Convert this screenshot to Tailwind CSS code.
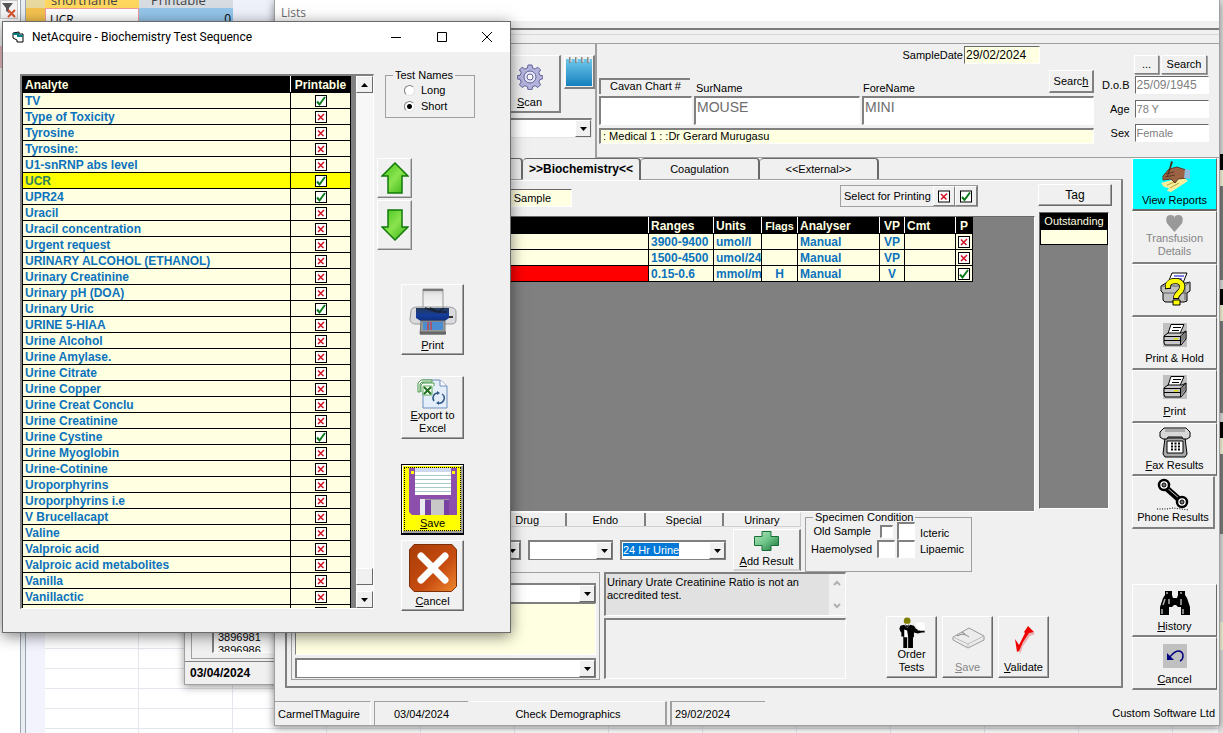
<!DOCTYPE html>
<html lang="en">
<head>
<meta charset="utf-8">
<title>NetAcquire</title>
<script src="https://cdn.jsdelivr.net/npm/@tailwindcss/browser@4"></script>
</head>
<body class="relative h-screen overflow-hidden bg-white font-['Liberation_Sans',Arial,sans-serif] text-[11px] leading-[13px] text-black">

<svg class="hidden" aria-hidden="true">
  <symbol id="tick" viewBox="0 0 12 12"><rect x=".5" y=".5" width="11" height="11" fill="#fff" stroke="#000"/><path d="M2 6.500L4.500 9.500 10 2" fill="none" stroke="#087a18" stroke-width="2"/></symbol>
  <symbol id="cross" viewBox="0 0 12 12"><rect x=".5" y=".5" width="11" height="11" fill="#fff" stroke="#000"/><path d="M3 3.5l5.500 5.500M9 3L3 9" stroke="#d01020" stroke-width="1.500"/></symbol>
  <symbol id="down" viewBox="0 0 7 4"><path d="M0 0h7L3.500 4z"/></symbol>
  <symbol id="printer" viewBox="0 0 24 24"><path fill="#c0c0c0" d="M0 0h24v24H0z"/><path d="M8 1.500h13l-4 9H5z" fill="#fff" stroke="#000"/><path d="M10 4.500h8M9 7.500h7" stroke="#000"/><path d="M1 13l4-3h14l4-2v8l-5 6H2l-1-2z" fill="#c8c8c8" stroke="#000"/><path d="M1 13.500h16l6-5M17.500 13v9M1 17.500h16" stroke="#000" fill="none"/><path d="M18 13l4-3v6l-4 4z" fill="#808080"/><path d="M11 15h4v1.500h-4z" fill="#dd0"/></symbol>
</svg>

<!-- datasheet behind the windows -->
<div class="absolute inset-0 flex" aria-hidden="true">
  <div class="w-5 shrink-0 bg-white">
    <div class="flex h-[19px] w-[18px] items-center justify-center border border-[#c8c8c8] bg-[#f4f4f4]">
      <svg class="h-4 w-4" viewBox="0 0 16 16"><path d="M1 1h11L8 6v5L5 9V6z" fill="#555"/><path d="M7 8l7 7M14 8l-7 7" stroke="#d9532c" stroke-width="2"/></svg>
    </div>
    <div class="mt-[27px] h-[22px] bg-[#f6c5cb]"></div>
  </div>
  <div class="w-[6px] shrink-0 border-x border-[#9aa5b5] bg-[#e9edf2]"></div>
  <div class="w-[19px] shrink-0 bg-[#f3f3fd]"><div class="h-2 bg-[#e8d9a0]"></div><div class="h-5 bg-[#f4c24e]"></div></div>
  <div class="min-w-0 flex-1 bg-[repeating-linear-gradient(to_bottom,transparent_0_8px,#e4e7ee_8px_9px,transparent_9px_20px),repeating-linear-gradient(to_right,transparent_0_93px,#e4e7ee_93px_94px)]">
    <div class="flex h-2 overflow-hidden font-['Open_Sans'] text-[13px] leading-[10px] text-[#444]">
      <div class="flex w-[94px] items-end bg-[#ffd75e] pl-[6px]"><span class="-translate-y-[3px]">shortname</span></div>
      <div class="flex w-[94px] items-end bg-[#d7dbe2] pl-3"><span class="-translate-y-[3px]">Printable</span></div>
      <div class="flex-1 bg-[#eef1fa]"></div>
    </div>
    <div class="flex h-5 font-['Open_Sans'] text-[12px] leading-[22px]">
      <div class="w-[94px] border border-[#f09a9a] bg-white pl-1">UCR</div>
      <div class="w-[94px] bg-[#94c6ea] pr-[2px] text-right">0</div>
      <div class="flex-1 bg-[#eef1fa]"></div>
    </div>
  </div>
</div>

<!-- strip of the window on the far right -->
<div class="absolute inset-y-0 right-0 w-[5px] bg-[#e4e4e4]" aria-hidden="true">
  <div class="mt-[154px] h-4 bg-black"></div><div class="h-4 bg-[#ffffe1]"></div><div class="h-[94px] bg-[#808080]"></div>
  <div class="mt-[9px] h-4 bg-black"></div><div class="h-4 bg-[#ffffe1]"></div><div class="h-[92px] bg-[#808080]"></div>
  <div class="mt-[9px] h-4 bg-black"></div><div class="h-4 bg-[#ffffe1]"></div><div class="h-[80px] bg-[#808080]"></div>
  <div class="mt-[88px] h-7 bg-[#ffffe1]"></div>
</div>

<!-- window with the sample list -->
<div class="absolute top-[600px] left-[184px] w-[200px] border border-[#a0a0a0] bg-[#f0f0f0] shadow-[0_2px_8px_rgba(0,0,0,.4)]" aria-hidden="true">
  <div class="ml-[6px] h-[58px] border-b border-l border-[#a0a0a0] pl-5">
    <div class="h-[52px] overflow-hidden border-b border-l-2 border-[#808080] border-b-white bg-[#f8f8f8] pt-[30px] pl-1"><div>3896981</div><div>3896986</div></div>
  </div>
  <div class="mt-[2px] border-t border-[#808080] px-[5px] py-1 text-[12px] leading-[14px] font-bold">03/04/2024</div>
</div>

<!-- main window -->
<main class="absolute top-0 right-[3px] left-[274px] flex flex-col border border-t-0 border-[#a0a0a0] bg-[#f0f0f0] shadow-[0_2px_8px_rgba(0,0,0,.45)]">
  <header class="h-[21px] bg-white pt-[6px] pl-[6px] font-['Open_Sans'] text-[12px] text-[#6d6d6d]">Lists</header>
  <div class="mt-[7px] h-[7px] border-t-2 border-b border-t-[#7a7a7a] border-b-[#d8d8d8]"></div>

  <div class="mt-2 flex h-[115px]">
    <section class="flex w-[321px] shrink-0 flex-col items-end border-t border-r border-[#a0a0a0] pt-[11px]">
      <div class="flex items-start gap-[3px]">
        <button class="flex h-[58px] w-[62px] flex-col items-center justify-between border-2 border-t border-l border-white border-r-[#808080] border-b-[#808080] pt-2 pb-[2px]">
          <svg class="h-[26px] w-[26px]" viewBox="0 0 26 26"><g fill="#b3b3dc" stroke="#62629a"><path d="M11 1h4l.600 3 2.500 1 2.700-1.800 2.800 2.800-1.800 2.700 1 2.500 3 .600v3l-3 .700-1 2.500 1.800 2.700-2.800 2.800-2.700-1.800-2.500 1-.600 3h-4l-.600-3-2.500-1-2.700 1.800-2.800-2.800 1.800-2.700-1-2.500-3-.700v-3l3-.600 1-2.500L2.400 6l2.800-2.800L7.900 5l2.500-1z"/><circle cx="13" cy="13" r="6" fill="#e8e8f8"/><circle cx="13" cy="13" r="3" fill="#fff"/></g></svg>
          <span><u>S</u>can</span>
        </button>
        <button aria-label="Notes" class="h-[34px] w-[31px] border-2 border-t border-l border-white border-r-[#808080] border-b-[#808080]">
          <svg class="h-[31px] w-[28px]" viewBox="0 0 28 31"><defs><linearGradient id="nb" x2="0" y2="1"><stop stop-color="#6fc8ea"/><stop offset="1" stop-color="#1580bd"/></linearGradient></defs><path d="M1 3h26v27H1z" fill="url(#nb)"/><path d="M5 1v6M11 1v6M17 1v6M23 1v6" stroke="#888" stroke-width="2"/><path d="M6 1v5M12 1v5M18 1v5M24 1v5" stroke="#eee"/></svg>
        </button>
      </div>
      <div class="relative mt-[5px] mr-[3px]">
        <select aria-label="Source" class="block h-5 w-[200px] appearance-none border-2 border-r border-b border-[#808080] border-r-[#e3e3e3] border-b-[#e3e3e3] bg-white"><option></option></select>
        <span class="pointer-events-none absolute top-[2px] right-[1px] flex h-[17px] w-4 items-center justify-center border border-white border-r-[#696969] border-b-[#696969] bg-[#f0f0f0]"><svg class="h-1 w-[7px]"><use href="#down"/></svg></span>
      </div>
    </section>

    <section class="flex min-w-0 flex-1 gap-2 border-t border-b border-l border-[#a0a0a0] pr-3 pl-[2px]">
      <div class="min-w-0 flex-1">
        <div class="flex items-center justify-end gap-px pt-[2px] pr-[54px]">
          <label for="sd">SampleDate</label>
          <input id="sd" value="29/02/2024" class="h-[18px] w-[76px] border border-[#696969] border-r-white border-b-white bg-[#ffffe1] pl-px text-[12px] outline-none">
        </div>
        <div class="mt-[6px] flex h-[23px] items-start">
          <div class="mt-2 h-4 w-[91px] border-t-2 border-l-2 border-[#808080] border-b-white text-center">Cavan Chart #</div>
          <label for="sn" class="mt-3 ml-[6px] w-[167px]">SurName</label>
          <label for="fn" class="mt-3 flex-1">ForeName</label>
          <button class="h-[23px] w-[45px] border-2 border-t border-l border-white border-r-[#808080] border-b-[#808080]">Searc<u>h</u></button>
        </div>
        <div class="mt-[3px] flex gap-[2px]">
          <input aria-label="Cavan Chart #" class="h-[29px] w-[93px] border-2 border-r border-b border-[#808080] border-r-white border-b-white bg-white">
          <input id="sn" value="MOUSE" class="h-[29px] w-[166px] border-2 border-r border-b border-[#808080] border-r-white border-b-white bg-white pb-2 pl-px text-[14px] text-[#6d6d6d]">
          <input id="fn" value="MINI" class="h-[29px] min-w-0 flex-1 border-2 border-r border-b border-[#808080] border-r-white border-b-white bg-white pb-2 pl-px text-[14px] text-[#6d6d6d]">
        </div>
        <div class="mt-[3px] h-4 border-2 border-r border-b border-[#808080] border-r-white border-b-white bg-[#ffffe1] pl-[2px]">: Medical 1 : :Dr Gerard Murugasu</div>
      </div>
      <div class="w-[105px] pt-[11px]">
        <div class="flex justify-end gap-[2px]">
          <button class="h-[19px] w-[25px] border border-white border-r-[#808080] border-b-[#808080] shadow-[1px_1px_0_#a0a0a0]">...</button>
          <button class="h-[19px] w-[46px] border border-white border-r-[#808080] border-b-[#808080] shadow-[1px_1px_0_#a0a0a0]">Search</button>
        </div>
        <div class="mt-[2px] grid grid-cols-[1fr_74px] items-center gap-x-[5px] gap-y-[6px] text-right">
          <label for="dob">D.o.B</label><input id="dob" value="25/09/1945" class="h-[18px] w-full border border-[#696969] border-r-white border-b-white bg-white pl-px text-[12px] text-[#808080]">
          <label for="age">Age</label><input id="age" value="78 Y" class="h-[18px] w-full border border-[#696969] border-r-white border-b-white bg-white pl-px text-[#808080]">
          <label for="sex">Sex</label><input id="sex" value="Female" class="h-[18px] w-full border border-[#696969] border-r-white border-b-white bg-white pl-px text-[#808080]">
        </div>
      </div>
    </section>
  </div>

  <div class="flex justify-between">
    <div class="ml-[10px] w-[838px]">
      <nav class="flex h-[21px] pl-[118px]">
        <button class="w-[120px] rounded-t-sm border-t border-r-2 border-[#696969]"></button>
        <button class="-mb-px w-[118px] rounded-t-sm border-t border-r-2 border-[#696969] bg-[#f0f0f0] text-[12px] font-bold">&gt;&gt;Biochemistry&lt;&lt;</button>
        <button class="w-[119px] rounded-t-sm border-t border-r-2 border-[#696969]">Coagulation</button>
        <button class="w-[119px] rounded-t-sm border-t border-r-2 border-[#696969]">&lt;&lt;External&gt;&gt;</button>
      </nav>
      <section class="border-2 border-t border-[#808080] border-t-[#a0a0a0] pb-[6px] shadow-[inset_0_1px_0_#fff]">
        <div class="flex pr-[9px]">
          <div class="min-w-0 flex-1 pt-[5px] pr-[3px]">
            <div class="flex h-[31px] items-start pl-[100px]">
              <div class="mt-1 h-[18px] w-[185px] border border-[#696969] border-r-white border-b-white bg-[#ffffe1] pr-5 text-right leading-4">24 Hr Urine Sample</div>
              <div class="ml-[268px] flex h-[22px] w-[138px] items-center justify-between border border-[#a0a0a0] border-r-[#808080] pl-[3px]">
                <span>Select for Printing</span>
                <span class="flex">
                  <button aria-label="None" class="flex h-5 w-[22px] items-center justify-center border border-white border-r-[#808080] border-b-[#808080]"><svg class="h-[13px] w-3"><use href="#cross"/></svg></button>
                  <button aria-label="All" class="flex h-5 w-[22px] items-center justify-center border border-white border-r-[#808080] border-b-[#808080]"><svg class="h-[13px] w-3"><use href="#tick"/></svg></button>
                </span>
              </div>
            </div>
            <div class="h-[296px] border border-[#696969] border-r-white border-b-white bg-[#808080]">
              <table class="w-[684px] table-fixed border-collapse text-[12px] leading-[14px] font-bold">
                <colgroup><col class="w-[360px]"><col class="w-[65px]"><col class="w-12"><col class="w-9"><col class="w-[82px]"><col class="w-[25px]"><col class="w-[51px]"><col class="w-[17px]"></colgroup>
                <thead><tr class="h-4 bg-black text-left text-[#ffffe1]">
                  <th class="border border-black border-r-white"></th><th class="border border-black border-r-white pl-[2px]">Ranges</th><th class="border border-black border-r-white pl-[2px]">Units</th><th class="border border-black border-r-white p-0 text-center text-[11px]">Flags</th><th class="border border-black border-r-white pl-[2px]">Analyser</th><th class="border border-black border-r-white text-center">VP</th><th class="border border-black border-r-white pl-[2px]">Cmt</th><th class="border border-black text-center">P</th>
                </tr></thead>
                <tbody id="results" class="text-[#0b72bd]"></tbody>
              </table>
            </div>
          </div>
          <div class="w-[74px] pt-1">
            <button class="h-[22px] w-full border border-white border-r-[#696969] border-b-[#696969] text-[12px] shadow-[inset_-1px_-1px_0_#a0a0a0]">Tag</button>
            <div class="mt-[6px] ml-px h-[297px] w-[70px] border border-[#696969] border-r-white border-b-white bg-[#808080]">
              <div class="h-4 bg-black text-center leading-4 text-[#ffffe1]">Outstanding</div>
              <div class="h-4 border border-black bg-[#ffffe1]"></div>
            </div>
          </div>
        </div>

        <div class="flex">
          <div class="w-[514px]">
            <div class="ml-[202px] flex h-[15px] w-[312px] border-t border-r border-b border-white border-r-[#d0d0d0] border-b-[#d0d0d0] text-center leading-[15px]">
              <span class="flex-1 border-r-2 border-[#808080]">Drug</span><span class="flex-1 border-r-2 border-[#808080]">Endo</span><span class="flex-1 border-r-2 border-[#808080]">Special</span><span class="flex-1">Urinary</span>
            </div>
            <div class="flex items-start justify-end gap-[7px] pt-[2px]">
              <div class="relative mt-[11px]">
                <select aria-label="Test" class="block h-5 w-[150px] appearance-none border-2 border-r border-b border-[#808080] bg-white"><option></option></select>
                <span class="pointer-events-none absolute top-[2px] right-px flex h-[17px] w-4 items-center justify-center border border-white border-r-[#696969] border-b-[#696969] bg-[#f0f0f0]"><svg class="h-1 w-[7px]"><use href="#down"/></svg></span>
              </div>
              <div class="relative mt-[11px]">
                <select aria-label="Result" class="block h-5 w-[85px] appearance-none border-2 border-r border-b border-[#808080] bg-white"><option></option></select>
                <span class="pointer-events-none absolute top-[2px] right-px flex h-[17px] w-4 items-center justify-center border border-white border-r-[#696969] border-b-[#696969] bg-[#f0f0f0]"><svg class="h-1 w-[7px]"><use href="#down"/></svg></span>
              </div>
              <div class="relative mt-[11px]">
                <select aria-label="Sample type" class="block h-5 w-[106px] appearance-none border-2 border-r border-b border-[#808080] bg-white bg-[linear-gradient(#0078d7,#0078d7)] bg-[length:56px_13px] bg-[position:1px_1px] bg-no-repeat pl-px leading-[15px] text-white"><option>24 Hr Urine</option></select>
                <span class="pointer-events-none absolute top-[2px] right-px flex h-[17px] w-4 items-center justify-center border border-white border-r-[#696969] border-b-[#696969] bg-[#f0f0f0]"><svg class="h-1 w-[7px]"><use href="#down"/></svg></span>
              </div>
              <button class="flex h-[42px] w-[68px] flex-col items-center justify-between border-2 border-t border-l border-white border-r-[#808080] border-b-[#d0d0d0] pt-px pb-px">
                <svg class="h-5 w-[25px]" viewBox="0 0 25 20"><defs><linearGradient id="gp" x2="1" y2="1"><stop stop-color="#b8e8c0"/><stop offset=".5" stop-color="#6cc488"/><stop offset="1" stop-color="#187038"/></linearGradient></defs><path d="M8 .5h9v5h7.500v9H17v5H8v-5H.5v-9H8z" fill="url(#gp)" stroke="#187038"/></svg>
                <span><u>A</u>dd Result</span>
              </button>
            </div>
          </div>
          <fieldset class="mt-px ml-1 h-[59px] w-[167px] border border-[#a0a0a0] px-[5px]">
            <legend class="ml-[2px] px-[2px] leading-[9px]">Specimen Condition</legend>
            <div class="grid grid-cols-[64px_18px_18px_1fr] items-center gap-x-[2px] text-right">
              <label for="c1" class="pr-1">Old Sample</label><input id="c1" type="checkbox" class="h-[13px] w-[13px] appearance-none justify-self-center border-2 border-r border-b border-[#808080] border-r-white border-b-white bg-white">
              <input id="c2" type="checkbox" class="h-[18px] w-[18px] appearance-none border-2 border-r border-b border-[#808080] border-r-white border-b-white bg-white"><label for="c2" class="pt-1 pl-[3px] text-left">Icteric</label>
              <label for="c3" class="pr-1">Haemolysed</label><input id="c3" type="checkbox" class="h-[18px] w-[18px] appearance-none border-2 border-r border-b border-[#808080] border-r-white border-b-white bg-white">
              <input id="c4" type="checkbox" class="h-[18px] w-[18px] appearance-none border-2 border-r border-b border-[#808080] border-r-white border-b-white bg-white"><label for="c4" class="pl-[3px] text-left">Lipaemic</label>
            </div>
          </fieldset>
        </div>

        <div class="flex pl-1">
          <div class="h-[108px] w-[309px] border border-[#a0a0a0] px-[3px] pt-[10px]">
            <div class="relative">
              <select aria-label="Comment" class="block h-5 w-full appearance-none border-2 border-r border-b border-[#808080] bg-white"><option></option></select>
              <span class="pointer-events-none absolute top-[2px] right-px flex h-[17px] w-4 items-center justify-center border border-white border-r-[#696969] border-b-[#696969] bg-[#f0f0f0]"><svg class="h-1 w-[7px]"><use href="#down"/></svg></span>
            </div>
            <textarea aria-label="Comment text" class="block h-[52px] w-full resize-none border border-[#808080] border-r-white border-b-white bg-[#ffffe1]"></textarea>
            <div class="relative mt-[3px]">
              <select aria-label="Comment code" class="block h-5 w-full appearance-none border-2 border-r border-b border-[#808080] bg-white"><option></option></select>
              <span class="pointer-events-none absolute top-[2px] right-px flex h-[17px] w-4 items-center justify-center border border-white border-r-[#696969] border-b-[#696969] bg-[#f0f0f0]"><svg class="h-1 w-[7px]"><use href="#down"/></svg></span>
            </div>
          </div>
          <div class="ml-1 w-[242px]">
            <div class="flex h-11 justify-between border-2 border-r border-b border-[#808080] border-r-white border-b-white bg-[#e1e1e1] pl-px">
              <p class="w-[200px] pt-[2px]">Urinary Urate Creatinine Ratio is not an accredited test.</p>
              <div class="flex w-4 flex-col items-center justify-between bg-[#f0f0f0] py-[6px]">
                <svg class="h-[6px] w-2" fill="none" stroke="#b0b0b0" stroke-width="2"><path d="M1 5l3-3 3 3"/></svg>
                <svg class="h-[6px] w-2" fill="none" stroke="#b0b0b0" stroke-width="2"><path d="M1 1l3 3 3-3"/></svg>
              </div>
            </div>
            <div class="mt-[2px] h-[61px] border-2 border-r border-b border-[#808080] border-r-white border-b-white"></div>
          </div>
          <div class="flex items-end gap-[5px] pb-[2px] pl-10">
            <button class="flex h-[62px] w-[51px] flex-col items-center justify-between border border-white border-r-[#696969] border-b-[#696969] pb-[3px] shadow-[inset_-1px_-1px_0_#a0a0a0]">
              <svg class="h-8 w-[30px]" viewBox="0 0 30 32"><circle cx="10" cy="4" r="3.500" fill="#808000"/><path d="M7 7h6v3H7z" fill="#fff"/><path d="M3 9l4-1 3 3 3-3 4 1 2 3 5 2h4v2h-3l-4 1-4-1v5h-1v11h-5V21h-1v11H6V20H4v-4l-1-1-1-3z"/><path d="M7 13l3 1 1 7H7z" fill="#fff"/><path d="M8 8l4 3M12 8l-4 3" stroke="#000"/><path d="M19 6h9v8h-7z" fill="#fff"/></svg>
              <span>Order<br>Tests</span>
            </button>
            <button disabled class="flex h-[62px] w-[51px] flex-col items-center justify-between border border-white border-r-[#696969] border-b-[#696969] pt-[9px] pb-[3px] text-[#858585] shadow-[inset_-1px_-1px_0_#a0a0a0]">
              <svg class="h-[23px] w-[34px]" viewBox="0 0 34 23" fill="none"><path d="M2 11L18 2l15 8v4L17 22 2 14z" stroke="#999" fill="#ececec"/><path d="M2 11l15 7 16-8M17 18v4" stroke="#bbb"/><path d="M6 10l5-2 4 1 3 2M11 6l3 2" stroke="#888"/></svg>
              <span><u>S</u>ave</span>
            </button>
            <button class="flex h-[62px] w-[51px] flex-col items-center justify-between border border-white border-r-[#696969] border-b-[#696969] pt-[8px] pb-[3px] shadow-[inset_-1px_-1px_0_#a0a0a0]">
              <svg class="h-[30px] w-[22px]" viewBox="0 0 22 30"><path d="M3 16l4 6L14 6l2-4 6 7-5 2-7 10-3 8z" fill="#e8b0b0"/><path d="M2 14l4 6 6-12-1-1 4-6 6 6-5 1-6 9-4 9-2 1z" fill="#f00000"/></svg>
              <span><u>V</u>alidate</span>
            </button>
          </div>
        </div>
      </section>
    </div>

    <aside class="mr-[2px] flex w-[85px] flex-col">
      <button class="flex h-[53px] flex-col items-center justify-between border border-white border-r-[#696969] border-b-2 border-b-[#696969] bg-[#00ffff] pt-[2px] pb-[2px]">
        <svg class="h-8 w-9" viewBox="0 0 36 32"><path d="M4 22l22-6 5 4-17 11-4-1 2-3-5-1z" fill="#f6ee9a"/><path d="M10 24l10-4M13 27l9-5" stroke="#b8a040"/><path d="M6 15l6-7 8-2 9 3v8l-8 1-3 4-4-4-8 1z" fill="#9c6244" stroke="#5e3826"/><path d="M9 13l8-2M8 16l10-2" stroke="#5e3826"/><path d="M28 8l5 1v9l-6-1z" fill="#90bce0"/><path d="M14 0l2 1-5 14-1 1z" fill="#4a3020"/></svg>
        <span>View Reports</span>
      </button>
      <button disabled class="flex h-[53px] flex-col items-center justify-between border border-white border-r-[#696969] border-b-2 border-b-[#808080] pt-[2px] pb-1 text-[#858585]">
        <svg class="h-[17px] w-[17px] overflow-visible" viewBox="0 0 16 16"><path d="M8 17L1 9C-1 4 1 1 4 1s4 1 4 3c0-2 1-3 4-3s5 3 3 8z" fill="#999"/></svg>
        <span>Transfusion<br>Details</span>
      </button>
      <button aria-label="Print query" class="flex h-[53px] flex-col items-center border border-white border-r-[#696969] border-b-2 border-b-[#808080] pt-[7px]">
        <svg class="h-[34px] w-[32px]" viewBox="0 0 32 34"><path d="M13 1h15l-4 10H9z" fill="#fff" stroke="#000"/><path d="M15 4h10M13 7h10" stroke="#00c"/><path d="M2 14l5-3h20l4-1v9l-3 2v8l-3 1H6l-2-2v-7l-2-2z" fill="#c0c0c0" stroke="#000"/><path d="M2 14h24l5-4M4 21h24M26 14v14" stroke="#606060" fill="none"/><path d="M9 17c-1-8 5-8 8-8s7 2 6 7-6 5-6 11" fill="none" stroke="#000" stroke-width="6"/><path d="M9 16c-1-7 5-7 8-7s7 2 6 7-6 5-6 10" fill="none" stroke="#ff0" stroke-width="4.500"/><path d="M14 28h7v5h-7z" fill="#ff0" stroke="#000"/></svg>
      </button>
      <button class="flex h-[53px] flex-col items-center justify-between border border-white border-r-[#696969] border-b-2 border-b-[#808080] pt-[5px] pb-[3px]"><svg class="h-6 w-6"><use href="#printer"/></svg><span>Print &amp; Hold</span></button>
      <button class="flex h-[53px] flex-col items-center justify-between border border-white border-r-[#696969] border-b-2 border-b-[#808080] pt-1 pb-[3px]"><svg class="h-6 w-6"><use href="#printer"/></svg><span><u>P</u>rint</span></button>
      <button class="flex h-[53px] flex-col items-center justify-between border border-white border-r-[#696969] border-b-2 border-b-[#808080] pt-px pb-[2px]">
        <svg class="h-[34px] w-8" viewBox="0 0 32 34"><path d="M6 13h20l2 16-2 3H6l-2-3z" fill="#a8a8a8" stroke="#000"/><path d="M1 7l4-4h22l4 4v5l-3 2h-4l-1-2H9l-1 2H4l-3-2z" fill="#d8d8d8" stroke="#000"/><path d="M6 4h20v3H6z" fill="#aaa"/><path d="M8 16h16v12H8z" fill="#fff" stroke="#000"/><path d="M12 18.500h10M12 21.500h10M12 24.500h10" stroke="#000" stroke-width="2" stroke-dasharray="2 1.500"/></svg>
        <span><u>F</u>ax Results</span>
      </button>
      <button class="flex h-[53px] w-[83px] flex-col items-center justify-between border border-white border-r-2 border-r-[#808080] border-b-2 border-b-[#808080] pt-px pb-[3px]">
        <svg class="h-[33px] w-8" viewBox="0 0 32 33"><path d="M7 8l18 16" stroke="#000" stroke-width="6"/><path d="M8 8l16 14" stroke="#ccc" stroke-width="1"/><circle cx="7" cy="7" r="5" fill="#fff" stroke="#000" stroke-width="2.500"/><circle cx="7" cy="7" r="2" fill="#777" stroke="#000"/><circle cx="25" cy="24" r="5" fill="#fff" stroke="#000" stroke-width="2.500"/><circle cx="25" cy="24" r="2" fill="#777" stroke="#000"/><path d="M0 31h10l6-1 16 2" fill="none" stroke="#000" stroke-dasharray="1 1.500"/></svg>
        <span>Phone Results</span>
      </button>
      <button class="mt-[55px] flex h-[53px] flex-col items-center justify-between border border-white border-r-[#696969] border-b-2 border-b-[#808080] pt-[6px] pb-[2px]">
        <svg class="h-[25px] w-[30px]" viewBox="0 0 30 25"><path d="M5 0h7v4l1 3h4l1-3V0h7v4l2 3 3 9v8h-9v-8h-3l-2-2h-2l-2 2H9v8H0v-8l3-9 2-3z"/><path d="M6 2h2M20 2h2M5 8l-2 6M21 8v6M2 18v5M23 18v5M9 8v5" stroke="#b0b0b0" stroke-width="1.500"/></svg>
        <span><u>H</u>istory</span>
      </button>
      <button class="flex h-[53px] flex-col items-center justify-between border border-white border-r-[#696969] border-b-2 border-b-[#808080] pt-[6px] pb-[2px]">
        <svg class="h-6 w-6" viewBox="0 0 24 24"><path fill="#c0c0c0" d="M0 0h24v24H0z"/><path d="M4 9v7h7z" fill="#000080"/><path d="M6 14c4-5 6-7 9-7s5 2 5 5-1 4-3 5" fill="none" stroke="#000080" stroke-width="1.500"/></svg>
        <span><u>C</u>ancel</span>
      </button>
    </aside>
  </div>

  <footer class="mt-[11px] flex h-6 items-center gap-[3px] leading-[24px]">
    <div class="h-6 w-24 border-t border-r border-[#a0a0a0] border-r-white pl-[3px]">CarmelTMaguire</div>
    <div class="h-6 w-[94px] border-t border-l border-[#a0a0a0] text-center">03/04/2024</div>
    <div class="h-6 w-[196px] border-t border-r-2 border-white border-r-[#a0a0a0] text-center">Check Demographics</div>
    <div class="h-6 w-[95px] border-t border-l-2 border-[#a0a0a0] pl-[3px]">29/02/2024</div>
    <div class="flex-1 pr-1 text-right">Custom Software Ltd</div>
  </footer>
</main>

<!-- test sequence dialog -->
<div role="dialog" aria-labelledby="dt" class="absolute top-[21px] left-[2px] w-[509px] border border-[#6b6b6b] bg-[#f0f0f0] shadow-[0_3px_14px_rgba(0,0,0,.5)]">
  <div class="flex h-[30px] items-center bg-white pl-[9px]">
    <svg class="mr-2 h-3 w-3" viewBox="0 0 12 12"><path d="M1 2l6-1v2h4v8H5V9L1 7z" fill="#fff" stroke="#000"/><path d="M1 3h6M5 5h6" stroke="#008080" stroke-width="2"/></svg>
    <h1 id="dt" class="flex-1 font-['Roboto','Noto_Sans',sans-serif] text-[12px]">NetAcquire - Biochemistry Test Sequence</h1>
    <div class="flex">
      <button aria-label="Minimize" class="flex h-[30px] w-[46px] items-center justify-center"><svg class="h-[10px] w-[10px]"><path d="M0 5.500h10" stroke="#000"/></svg></button>
      <button aria-label="Maximize" class="flex h-[30px] w-[45px] items-center justify-center"><svg class="h-[10px] w-[10px]"><path d="M.5.5h9v9h-9z" fill="none" stroke="#000"/></svg></button>
      <button aria-label="Close" class="flex h-[30px] w-[46px] items-center justify-center"><svg class="h-[10px] w-[10px]"><path d="M0 0l10 10M10 0L0 10" stroke="#000"/></svg></button>
    </div>
  </div>
  <div class="flex items-start px-[17px] pt-[22px] pb-[21px]">
    <div class="flex h-[535px] w-[354px] overflow-hidden border-2 border-r border-b border-[#808080] border-r-white border-b-white">
      <div class="flex-1 overflow-hidden bg-[#808080]">
        <table class="w-[328px] table-fixed border-collapse text-[12px] leading-[14px] font-bold">
          <colgroup><col class="w-[268px]"><col class="w-[60px]"></colgroup>
          <thead><tr class="h-4 bg-black text-left text-[#ffffe1]"><th class="border border-black border-r-white pl-[2px]">Analyte</th><th class="border border-black p-0 text-center">Printable</th></tr></thead>
          <tbody id="analytes" class="text-[#0b72bd]"></tbody>
        </table>
      </div>
      <div class="flex w-[17px] flex-col bg-[#f7f7f7]">
        <button aria-label="Scroll up" class="flex h-[17px] items-center justify-center border border-white border-r-[#696969] border-b-[#696969] bg-[#f0f0f0]"><svg class="h-1 w-[7px] rotate-180"><use href="#down"/></svg></button>
        <div class="flex-1"></div>
        <div class="h-[17px] border border-white border-r-[#696969] border-b-[#696969] bg-[#f0f0f0]"></div>
        <button aria-label="Scroll down" class="mt-[6px] flex h-[17px] items-center justify-center border border-white border-r-[#696969] border-b-[#696969] bg-[#f0f0f0]"><svg class="h-1 w-[7px]"><use href="#down"/></svg></button>
      </div>
    </div>

    <div class="ml-[3px] flex-1">
      <fieldset class="-mt-[5px] ml-2 h-[49px] w-[90px] border border-[#a0a0a0] pl-[18px]">
        <legend class="-ml-[11px] px-[2px]">Test Names</legend>
        <div class="mt-[2px] flex items-center gap-[6px]"><input id="r1" name="n" type="radio" class="h-[11px] w-[11px] appearance-none rounded-full border border-[#808080] border-r-[#e3e3e3] border-b-[#e3e3e3] bg-white"><label for="r1">Long</label></div>
        <div class="mt-[3px] flex items-center gap-[6px]"><input id="r2" name="n" type="radio" checked class="h-[11px] w-[11px] appearance-none rounded-full border border-[#808080] border-r-[#e3e3e3] border-b-[#e3e3e3] bg-white checked:bg-[radial-gradient(circle,#000_2px,#fff_3px)]"><label for="r2">Short</label></div>
      </fieldset>
      <div class="mt-10 flex w-[35px] flex-col gap-[2px]">
        <button aria-label="Move up" class="flex h-10 items-center justify-center border border-white border-r-[#808080] border-b-[#808080] shadow-[inset_-1px_-1px_0_#c0c0c0]"><svg class="h-8 w-7" viewBox="0 0 28 32"><defs><linearGradient id="ga" x2="1" y2="1"><stop stop-color="#3fc31c"/><stop offset=".5" stop-color="#8be44e"/><stop offset="1" stop-color="#2fae12"/></linearGradient></defs><path d="M14 1l13 13h-6v17H7V14H1z" fill="url(#ga)" stroke="#127a08" stroke-width="1.500"/></svg></button>
        <button aria-label="Move down" class="flex h-[50px] items-center justify-center border border-white border-r-[#808080] border-b-[#808080] shadow-[inset_-1px_-1px_0_#c0c0c0]"><svg class="h-8 w-7" viewBox="0 0 28 32"><path d="M14 31L1 18h6V1h14v17h6z" fill="url(#ga)" stroke="#127a08" stroke-width="1.500"/></svg></button>
      </div>
      <div class="mt-[34px] ml-6 w-[63px]">
        <button class="flex h-[71px] w-full flex-col items-center justify-between border border-white border-r-[#696969] border-b-[#696969] pt-[3px] pb-[2px] shadow-[inset_-1px_-1px_0_#a0a0a0]">
          <svg class="h-12 w-12" viewBox="0 0 48 48"><defs><linearGradient id="pp" x2="0" y2="1"><stop stop-color="#c4c4c4"/><stop offset=".3" stop-color="#e8e8e8"/><stop offset="1" stop-color="#f6f6f6"/></linearGradient><linearGradient id="pb" x2="0" y2="1"><stop stop-color="#243a58"/><stop offset=".5" stop-color="#143c9c"/><stop offset="1" stop-color="#10286c"/></linearGradient></defs><path d="M14 1h20v19H14z" fill="url(#pp)" stroke="#999"/><path d="M14 2h20" stroke="#777" stroke-width="2"/><path d="M2 23c0-3 3-4 8-4h28c5 0 9 1 9 5v8c0 3-2 4-5 4H7c-4 0-6-2-6-5z" fill="#d8dadd" stroke="#999"/><path d="M7 20h33v10l-7 5H15l-8-5z" fill="url(#pb)"/><path d="M21 20l8 4 6-4M16 20l12 4h10" stroke="#182434" stroke-width="1.500" fill="none"/><path d="M40 28h4v2h-4z" fill="#333"/><path d="M12 33h24l0 13H11z" fill="#999" stroke="#777"/><path d="M14 34h20v8H14z" fill="#4c8cd0"/><path d="M19 34v8M22 34v8" stroke="#c04848" stroke-width="1.500"/><path d="M11 45h26" stroke="#666" stroke-width="3"/></svg>
          <span><u>P</u>rint</span>
        </button>
        <button class="mt-[21px] flex h-[63px] w-full flex-col items-center justify-between border border-white border-r-[#696969] border-b-[#696969] pt-[2px] pb-[3px] shadow-[inset_-1px_-1px_0_#a0a0a0]">
          <svg class="h-[30px] w-[31px]" viewBox="0 0 31 30"><path d="M6 1h17l7 6v22H6z" fill="#e4eefa" stroke="#6b8fbd"/><path d="M23 1v6h7" fill="#fff" stroke="#6b8fbd"/><path d="M1 13V4l3-3h11v2H5L3 5v8zM4 13V6l2-2h11v3" fill="#fff" stroke="#489848"/><path d="M6 7h9v9H6z" fill="#fff" stroke="#5cae5c"/><path d="M7 8l7 7M14 8l-7 7" stroke="#207020" stroke-width="2"/><path d="M17 22a5 5 0 0 1 4-8M25 15a5 5 0 0 1-4 9" fill="none" stroke="#305888" stroke-width="1.500"/><path d="M20 12l3 2-3 2zM22 22l-3 2 3 2z" fill="#305888"/></svg>
          <span><u>E</u>xport to<br>Excel</span>
        </button>
        <button class="mt-[25px] flex h-[71px] w-full border border-black border-b-2 bg-[#ffff00] p-[2px] shadow-[inset_1px_1px_0_#fff,inset_-2px_-2px_0_#a0a0a0]">
          <span class="flex h-full w-full flex-col items-center justify-between border border-dotted border-black">
            <svg class="h-[47px] w-12" viewBox="0 0 48 47"><path d="M0 0h48v47H3l-3-3z" fill="#8c50ac"/><path d="M6 0h36v27H6z" fill="#fff"/><path d="M6 0h36v4H6z" fill="#cfd8ec"/><path d="M6 7.500h36M6 11.500h36M6 15.500h36M6 19.500h36M6 23.500h36" stroke="#a8c8c8"/><path d="M2 3h3v3H2zM43 3h3v3h-3z" fill="#ff0"/><path d="M11 31h29v16H11z" fill="#9a9aa4"/><path d="M11 31h5v16h-5z" fill="#e8e8f0"/><path d="M16 32h6v15h-6z" fill="#7840a0"/><path d="M22 32h13v15H22z" fill="#c8c8c8"/><path d="M35 32h5v15h-5z" fill="#7840a0"/></svg>
            <span><u>S</u>ave</span>
          </span>
        </button>
        <button class="mt-[5px] flex h-[71px] w-full flex-col items-center justify-between border border-white border-r-[#696969] border-b-[#696969] pt-[3px] pb-[2px] shadow-[inset_-1px_-1px_0_#a0a0a0]">
          <svg class="h-12 w-12" viewBox="0 0 48 48"><defs><linearGradient id="oc" x2="1" y2="1"><stop stop-color="#a83c08"/><stop offset=".6" stop-color="#c84c10"/><stop offset="1" stop-color="#ee8a30"/></linearGradient></defs><path d="M5 .5h38l4.500 5v37l-5 5H5l-4.500-5v-37z" fill="url(#oc)" stroke="#7c3008"/><path d="M12 12l24 24M36 12L12 36" stroke="#fff" stroke-width="7" stroke-linecap="round"/></svg>
          <span><u>C</u>ancel</span>
        </button>
      </div>
    </div>
  </div>
</div>

<script>
const mark = on => `<svg class="mx-auto block h-3 w-3" role="img" aria-label="${on ? 'Yes' : 'No'}"><use href="#${on ? 'tick' : 'cross'}"/></svg>`;
const names = ['TV','Type of Toxicity','Tyrosine','Tyrosine:','U1-snRNP abs level','UCR','UPR24','Uracil','Uracil concentration','Urgent request','URINARY ALCOHOL (ETHANOL)','Urinary Creatinine','Urinary pH (DOA)','Urinary Uric','URINE 5-HIAA','Urine Alcohol','Urine Amylase.','Urine Citrate','Urine Copper','Urine Creat Conclu','Urine Creatinine','Urine Cystine','Urine Myoglobin','Urine-Cotinine','Uroporphyrins','Uroporphyrins i.e','V Brucellacapt','Valine','Valproic acid','Valproic acid metabolites','Vanilla','Vanillactic',''];
const printable = ['TV','UCR','UPR24','Urinary Uric','Urine Cystine'];
document.getElementById('analytes').innerHTML = names.map(n =>
  `<tr class="h-4 ${n === 'UCR' ? 'bg-[#ffff00] text-[#2c8060]' : 'bg-[#ffffe1]'}"><td class="border border-black p-0 pl-[2px] whitespace-nowrap">${n}</td><td class="border border-black p-0">${mark(printable.includes(n))}</td></tr>`).join('');
const results = [['','3900-9400','umol/l','','Manual','VP','',0],['','1500-4500','umol/24','','Manual','VP','',0],['!','0.15-0.6','mmol/mmol','H','Manual','V','',1]];
const pads = ['', 'pl-[2px]', 'pl-[2px]', 'text-center', 'pl-[2px]', 'text-center', 'pl-[2px]'];
document.getElementById('results').innerHTML = results.map(r =>
  `<tr class="h-4 bg-[#ffffe1]">${r.slice(0, 7).map((c, i) => i === 0
    ? `<td class="border border-black ${c ? 'bg-[#ff0000]' : ''}"></td>`
    : `<td class="border border-black ${pads[i]}"><div class="overflow-hidden whitespace-nowrap">${i ? c : ''}</div></td>`).join('')}<td class="border border-black p-0">${mark(r[7])}</td></tr>`).join('');
</script>
</body>
</html>
